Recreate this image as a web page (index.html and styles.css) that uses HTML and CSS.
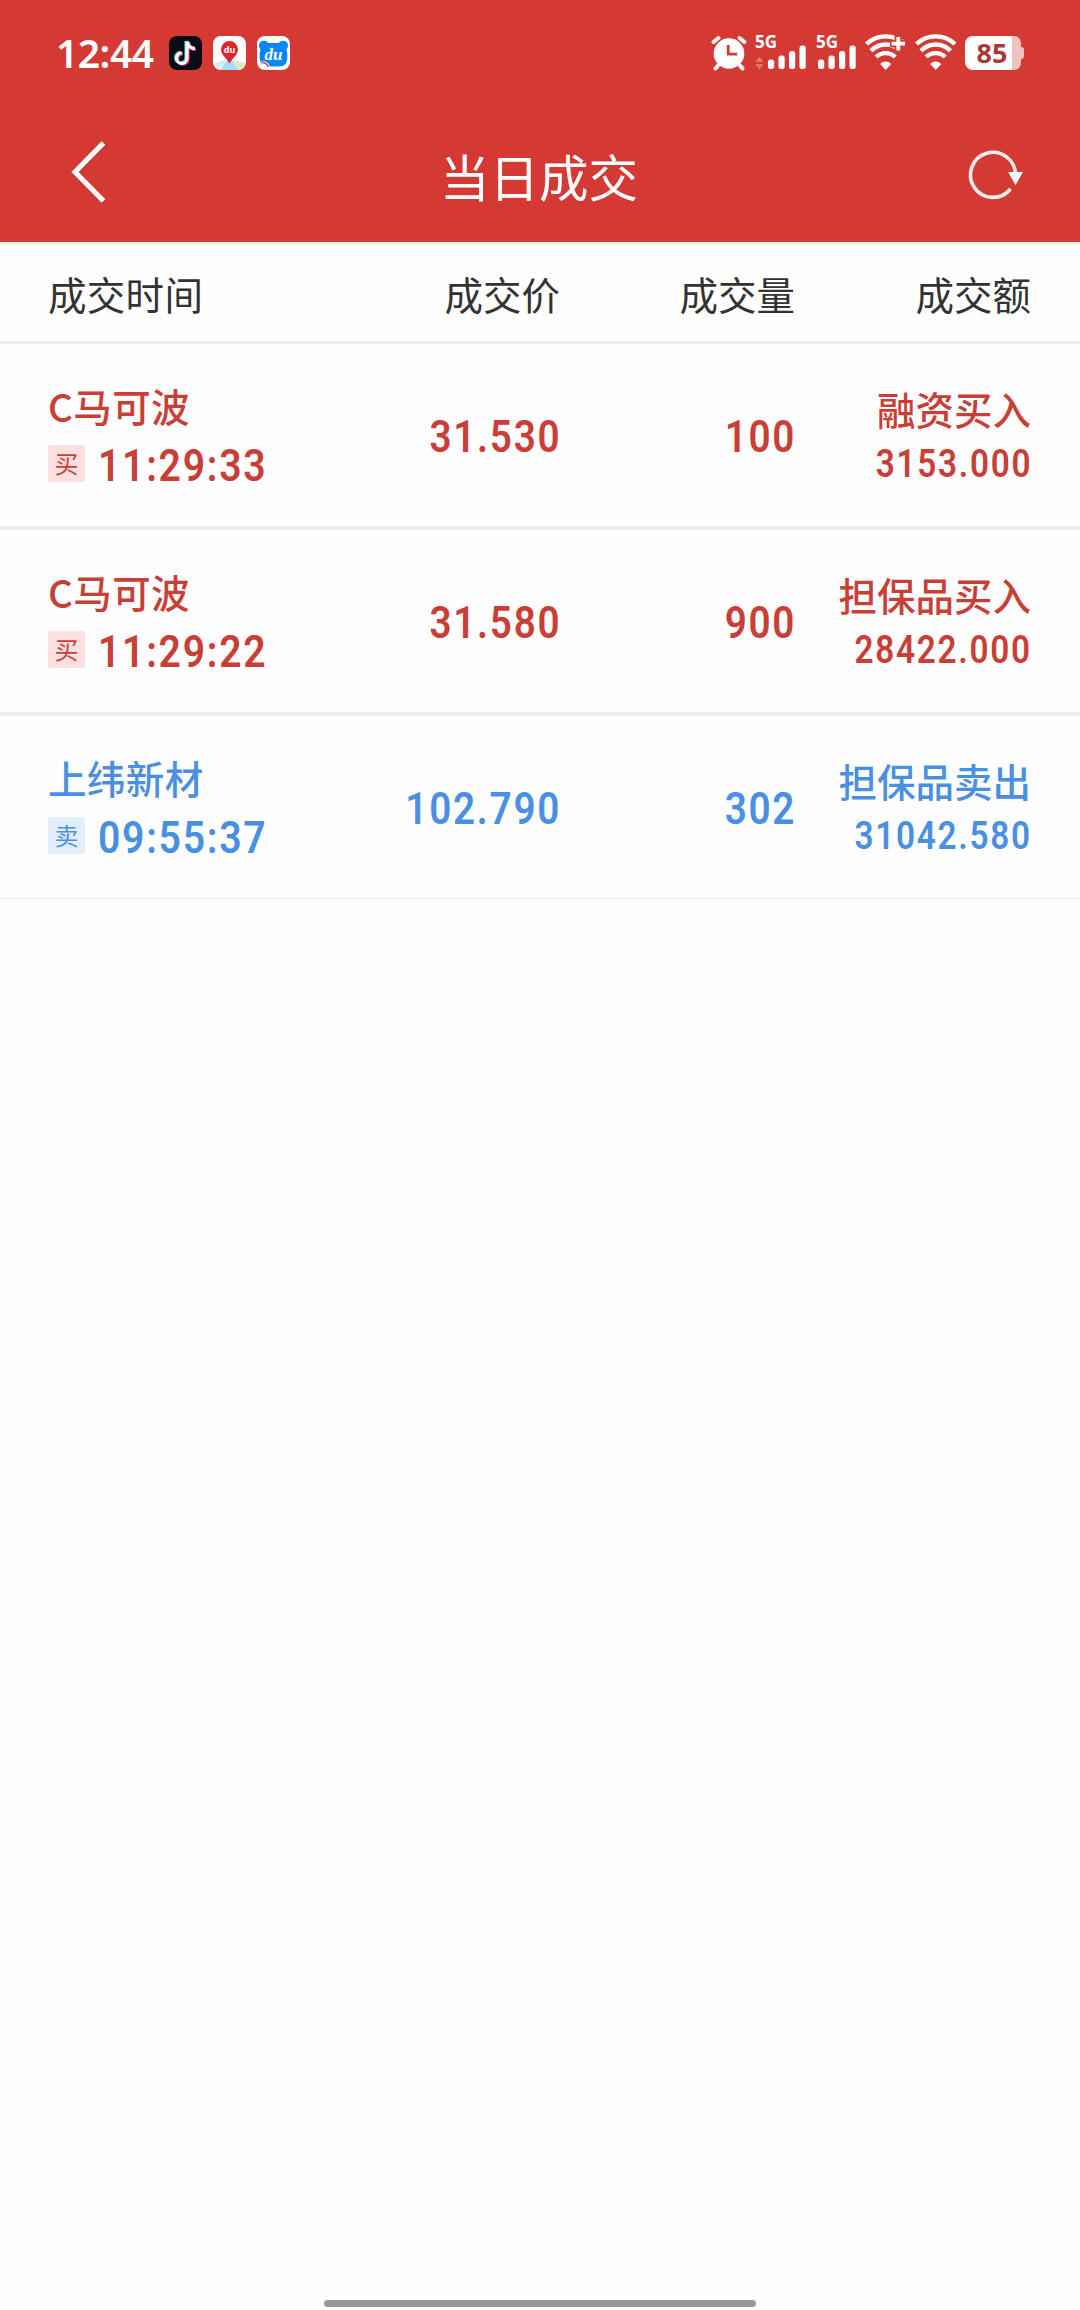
FILE: index.html
```
<!DOCTYPE html>
<html lang="zh-CN">
<head>
    <meta charset="UTF-8">
    <meta name="viewport" content="width=device-width, initial-scale=1.0">
    <title>当日成交</title>
    <link rel="stylesheet" href="styles.css">
</head>
<body>
    <header class="header">
        <div class="status-bar">
            <div class="status-left">
                <span class="clock">12:44</span>
                <svg class="app-icon" viewBox="0 0 33 34">
                    <rect width="33" height="34" rx="8" fill="#0b0b14"/>
                    <g fill="none" stroke-width="3.2">
                        <path d="M18 5.500v17a5.200 5.200 0 1 1-5.200-5.500M18.500 5.500c.5 4.500 3.500 7 7.500 7" stroke="#25e5df" transform="translate(-1 -.6)"/>
                        <path d="M18 5.500v17a5.200 5.200 0 1 1-5.200-5.500M18.500 5.500c.5 4.500 3.500 7 7.500 7" stroke="#f5345c" transform="translate(1 .8)"/>
                        <path d="M18 5.500v17a5.200 5.200 0 1 1-5.200-5.500M18.500 5.500c.5 4.500 3.500 7 7.500 7" stroke="#fff"/>
                    </g>
                </svg>
                <svg class="app-icon" viewBox="0 0 33 34">
                    <rect width="33" height="34" rx="8" fill="#fff"/>
                    <path d="M2 27l11-3-7 9a8 8 0 0 1-4-6z" fill="#cfeaf3"/>
                    <path d="M13 25h7l6 9H7z" fill="#a9dbf5"/>
                    <path d="M20 24l12 3c-.5 4-3 6-6 7z" fill="#d5ebbd"/>
                    <path d="M16.500 5a8.500 8.500 0 0 1 8.500 8.500c0 5-5 8-8.500 14-3.500-6-8.500-9-8.500-14A8.500 8.500 0 0 1 16.500 5z" fill="#e0242b"/>
                    <text x="16.500" y="16.500" class="du-small">du</text>
                </svg>
                <svg class="app-icon" viewBox="0 0 33 34">
                    <rect width="33" height="34" rx="8" fill="#fff"/>
                    <path d="M2 9.500C2 4 9 3.500 11 7h11c2-3.500 9-3 9 2.500 0 2-1 3-1.500 4 1.500 6 1 12-1 14.500-2 2.500-6 2.500-12 2.500S6.500 31 4.500 28c-2-3-2.500-9-1-14.500C3 12.500 2 11.500 2 9.500z" fill="#0a86fb"/>
                    <path d="M4 26c4-2 8 1 9 5l-6 1z" fill="#fff"/>
                    <path d="M5 26.500c3 0 5.500 2 6.500 4.500" fill="none" stroke="#d8434a" stroke-width="1.500"/>
                    <text x="16.500" y="23.500" class="du-script">du</text>
                </svg>
            </div>
            <div class="status-right">
                <svg class="alarm" width="36" height="36" viewBox="0 0 36 36">
                    <g stroke="#fff" stroke-width="4" stroke-linecap="round">
                        <path d="M2.500 7l5-4M33.500 7l-5-4M7.500 30l-3 3.500M28.500 30l3 3.500"/>
                    </g>
                    <circle cx="18" cy="18.500" r="16.500" fill="#d43a33"/>
                    <path d="M7.500 30l-3 3.500M28.500 30l3 3.500" stroke="#fff" stroke-width="3.400" stroke-linecap="round"/>
                    <circle cx="18" cy="18.500" r="15.300" fill="#fff"/>
                    <path d="M17.200 10v9.200h9" fill="none" stroke="#d43a33" stroke-width="2.800"/>
                </svg>
                <svg class="signal-a" width="52" height="36" viewBox="0 0 52 36">
                    <text x="0" y="13" class="net">5G</text>
                    <path d="M4.500 21.500l4 5.500h-8zM4.500 34.500l4-5.500h-8z" fill="#e8746c"/>
                    <rect x="13" y="24.500" width="6.200" height="9.500" rx="2.500" fill="#fff"/>
                    <rect x="23.500" y="20.500" width="6.200" height="13.500" rx="2.500" fill="#fff"/>
                    <rect x="34" y="16" width="6.200" height="18" rx="2.500" fill="#fff"/>
                    <rect x="44.500" y="10.500" width="6.200" height="23.500" rx="2.500" fill="#fff"/>
                </svg>
                <svg class="signal-b" width="41" height="36" viewBox="0 0 41 36">
                    <text x="0" y="13" class="net">5G</text>
                    <rect x="2" y="24.500" width="6.200" height="9.500" rx="2.500" fill="#fff"/>
                    <rect x="12.500" y="20.500" width="6.200" height="13.500" rx="2.500" fill="#fff"/>
                    <rect x="23" y="16" width="6.200" height="18" rx="2.500" fill="#fff"/>
                    <rect x="33.500" y="10.500" width="6.200" height="23.500" rx="2.500" fill="#fff"/>
                </svg>
                <svg class="wifi-plus" width="42" height="36" viewBox="0 0 42 36">
                    <g fill="none" stroke="#fff" stroke-width="4.400">
                        <path d="M1.500 9a28 28 0 0 1 38.500 0M6 15.800a20.500 20.500 0 0 1 29.500 0M11.200 22a13.500 13.500 0 0 1 19 0"/>
                    </g>
                    <path d="M20.700 35l-5.500-6a7.500 7.500 0 0 1 11 0z" fill="#fff"/>
                    <path d="M25 8.700h17M33.300 0v17.500" stroke="#d43a33" stroke-width="7.500"/>
                    <path d="M26.500 8.700H40M33.300 2v13.500" stroke="#fff" stroke-width="3.800"/>
                </svg>
                <svg class="wifi" width="42" height="36" viewBox="0 0 42 36">
                    <g fill="none" stroke="#fff" stroke-width="4.400">
                        <path d="M1.500 9a28 28 0 0 1 38.500 0M6 15.800a20.500 20.500 0 0 1 29.500 0M11.200 22a13.500 13.500 0 0 1 19 0"/>
                    </g>
                    <path d="M20.700 35l-5.500-6a7.500 7.500 0 0 1 11 0z" fill="#fff"/>
                </svg>
                <svg class="battery" width="59" height="34" viewBox="0 0 59 34">
                    <path d="M47 0h2a7 7 0 0 1 7 7v4c2 0 3 1 3 3v6c0 2-1 3-3 3v4a7 7 0 0 1-7 7h-2z" fill="#f4c3c1"/>
                    <path d="M8 0h39v34H8a8 8 0 0 1-8-8V8a8 8 0 0 1 8-8z" fill="#fff"/>
                    <text x="27" y="26.500" class="level">85</text>
                </svg>
            </div>
        </div>
        <nav class="nav">
            <svg class="back" width="40" height="64" viewBox="0 0 40 64">
                <path d="M36 3L7 32l29 29" fill="none" stroke="#b8302b" stroke-width="4.500" transform="translate(0 1.500)"/>
                <path d="M35.500 3L7 32l28.500 29" fill="none" stroke="#fff" stroke-width="5.200"/>
            </svg>
            <h1>当日成交</h1>
            <svg class="refresh" width="56" height="52" viewBox="0 0 56 52">
                <path d="M47.500 26A22.500 22.500 0 1 0 42.500 40" fill="none" stroke="#ffeeed" stroke-width="3.600"/>
                <path d="M40 23h15l-7.500 13z" fill="#fff"/>
            </svg>
        </nav>
    </header>

    <main>
        <div class="table-head grid">
            <span>成交时间</span>
            <span>成交价</span>
            <span>成交量</span>
            <span>成交额</span>
        </div>

        <div class="row grid buy">
            <div class="stock">
                <div class="name">C马可波</div>
                <div class="when"><span class="tag">买</span><span class="num">11:29:33</span></div>
            </div>
            <div class="cell"><span class="num">31.530</span></div>
            <div class="cell"><span class="num">100</span></div>
            <div class="amount">
                <div class="kind">融资买入</div>
                <div class="num">3153.000</div>
            </div>
        </div>

        <div class="row grid buy">
            <div class="stock">
                <div class="name">C马可波</div>
                <div class="when"><span class="tag">买</span><span class="num">11:29:22</span></div>
            </div>
            <div class="cell"><span class="num">31.580</span></div>
            <div class="cell"><span class="num">900</span></div>
            <div class="amount">
                <div class="kind">担保品买入</div>
                <div class="num">28422.000</div>
            </div>
        </div>

        <div class="row grid sell">
            <div class="stock">
                <div class="name">上纬新材</div>
                <div class="when"><span class="tag">卖</span><span class="num">09:55:37</span></div>
            </div>
            <div class="cell"><span class="num">102.790</span></div>
            <div class="cell"><span class="num">302</span></div>
            <div class="amount">
                <div class="kind">担保品卖出</div>
                <div class="num">31042.580</div>
            </div>
        </div>
    </main>

    <div class="home-bar"></div>
</body>
</html>
```
FILE: styles.css
```
* {
    box-sizing: border-box;
}

body {
    margin: 0;
    height: 2310px;
    display: flex;
    flex-direction: column;
    background-color: #fefefe;
    font-family: "Noto Sans CJK SC", sans-serif;
    overflow: hidden;
}

svg {
    display: block;
    flex: none;
    overflow: visible;
}

.header {
    height: 245px;
    background-color: #d43a33;
    border-bottom: 3px solid #f5e9e9;
    color: #fff;
}

/* status bar */
.status-bar {
    height: 106px;
    display: flex;
    justify-content: space-between;
    padding: 0 56px 0 56px;
}

.status-left, .status-right {
    display: flex;
    align-items: center;
}

.clock {
    width: 113px;
    font-family: "Noto Sans", sans-serif;
    font-size: 39px;
    font-weight: 600;
    line-height: 54px;
    letter-spacing: -0.500px;
}

.app-icon {
    width: 33px;
    height: 34px;
    margin-right: 11px;
}

.alarm {
    margin-right: 1px;
}

.signal-a {
    margin-left: 7px;
}

.signal-b {
    margin-left: 9px;
}

.wifi-plus {
    margin-left: 8px;
}

.wifi {
    margin-left: 8px;
}

.battery {
    margin-left: 8px;
}

.net {
    font: 700 17px "Noto Sans", sans-serif;
    fill: #fff;
}

.level {
    font: 700 27px "Noto Sans", sans-serif;
    fill: #a83a36;
    text-anchor: middle;
}

.du-small {
    font: 700 9px "Noto Sans", sans-serif;
    fill: #fff;
    text-anchor: middle;
}

.du-script {
    font: italic 700 17px "Liberation Serif", serif;
    fill: #fff;
    text-anchor: middle;
}

/* title bar */
.nav {
    height: 136px;
    display: flex;
    justify-content: space-between;
    padding: 0 56px 0 68px;
}

.back {
    margin-top: 34px;
}

.refresh {
    margin-top: 43px;
}

.nav h1 {
    margin: 34px 0 0 2px;
    font-size: 49.500px;
    font-weight: 400;
    line-height: 72px;
}

/* deals */
.grid {
    display: grid;
    grid-template-columns: 276px 236px 235px 236px;
    padding: 0 48px;
    white-space: nowrap;
}

.table-head {
    height: 99px;
    border-bottom: 3px solid #eee;
    align-items: center;
    text-align: right;
    font-size: 38.500px;
    line-height: 56px;
    color: #333;
}

.table-head span:first-child {
    text-align: left;
    letter-spacing: 0.300px;
}

.row {
    height: 186px;
    border-bottom: 4px solid #eee;
}

.row:last-child {
    height: 183px;
    border-bottom: 1px solid #eee;
}

.buy {
    color: #c93f37;
}

.sell {
    color: #4a90e2;
}

.name, .kind {
    font-size: 38.500px;
    font-weight: 500;
    line-height: 56px;
}

.name {
    letter-spacing: 0.400px;
}

.stock {
    padding-top: 33px;
}

.when {
    display: flex;
    align-items: center;
    height: 60px;
    margin-top: 1px;
}

.tag {
    width: 37px;
    height: 37px;
    margin: 0 13px 2px 0;
    border-radius: 3px;
    background-color: #fcdfdf;
    font-size: 24px;
    line-height: 35px;
    text-align: center;
}

.sell .tag {
    background-color: #e3eefc;
}

.num {
    display: inline-block;
    font-family: Roboto, sans-serif;
    font-size: 45px;
    font-weight: 600;
    line-height: 56px;
    letter-spacing: 2px;
    transform: scaleX(0.86);
    transform-origin: right;
    margin-right: -1px;
}

.when .num {
    transform: scaleX(0.87);
    transform-origin: left;
    padding-top: 3px;
}

.cell {
    padding-top: 65px;
    text-align: right;
}

.amount {
    padding-top: 36px;
    text-align: right;
}

.amount .num {
    font-size: 39.500px;
    line-height: 50px;
    padding-top: 3px;
    transform: scaleX(0.845);
}

/* gesture bar */
.home-bar {
    width: 432px;
    height: 7px;
    margin: auto auto 3px;
    border-radius: 4px;
    background-color: #999;
}
```
